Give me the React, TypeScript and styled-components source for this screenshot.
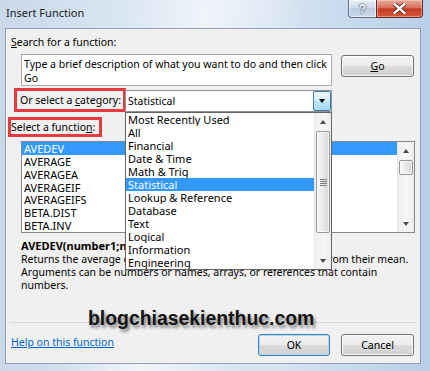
import React from 'react'
import styled, { createGlobalStyle } from 'styled-components'

const GlobalStyle = createGlobalStyle`
  html, body {
    margin: 0;
    padding: 0;
    background: #ffffff;
  }
  body {
    font-family: 'Noto Sans', 'Liberation Sans', sans-serif;
    font-size: 10.5px;
    color: #000;
  }
`

const Window = styled.div`
  position: relative;
  width: 430px;
  height: 371px;
  box-sizing: border-box;
  padding: 0 9px 7px 5px;
  display: flex;
  flex-direction: column;
  overflow: hidden;
  background:
    linear-gradient(100deg, rgba(255, 255, 255, 0) 25%, rgba(255, 255, 255, 0.6) 42%, rgba(255, 255, 255, 0) 62%),
    linear-gradient(90deg, #c9d9ea 0%, #dae6f3 30%, #d6e4f2 65%, #b7cfe9 100%);
`

const TitleBar = styled.div`
  height: 28px;
  flex: none;
  display: flex;
  justify-content: space-between;
  align-items: flex-start;
`

const Title = styled.div`
  margin: 5px 0 0 1px;
  font-size: 11px;
  line-height: 16px;
  color: #1b1b1b;
`

const CaptionButtons = styled.div`
  display: flex;
  margin-right: -2px;
`

const HelpCaption = styled.div`
  width: 28px;
  height: 18px;
  box-sizing: border-box;
  border: 1px solid #5e6f86;
  border-top: none;
  border-right: none;
  border-radius: 0 0 0 4px;
  background: linear-gradient(#e6eef7, #cfdcec 45%, #bccde2 50%, #c9d8ea);
  box-shadow: inset 0 0 0 1px rgba(255, 255, 255, 0.55);
  display: flex;
  align-items: center;
  justify-content: center;
  font-family: 'Liberation Sans', sans-serif;
  font-weight: 700;
  font-size: 12px;
  color: #ffffff;
  text-shadow: 0 0 1px #2c3a4f, 0 0 2px #2c3a4f;
`

const CloseCaption = styled.div`
  width: 47px;
  height: 18px;
  box-sizing: border-box;
  border: 1px solid #6a2b22;
  border-top: none;
  border-radius: 0 0 4px 0;
  background: linear-gradient(#e9ab9c, #d7705c 45%, #c43b24 52%, #d3583d);
  box-shadow: inset 0 0 0 1px rgba(255, 220, 210, 0.45);
  display: flex;
  align-items: center;
  justify-content: center;
`

const Client = styled.div`
  flex: 1;
  position: relative;
  display: flex;
  flex-direction: column;
  background: #f0f0f0;
  border: 1px solid #8e9fb3;
`

const Label = styled.div`
  margin: 6px 0 0 5px;
  line-height: 15px;
  white-space: nowrap;
`

const SearchRow = styled.div`
  display: flex;
  gap: 9px;
  margin: 4px 0 0 15px;
`

const SearchBox = styled.div`
  box-sizing: border-box;
  width: 311px;
  height: 32px;
  padding: 2px 2px;
  background: #ffffff;
  border: 1px solid #abadb3;
  border-top-color: #9fa2a8;
  line-height: 14px;
  white-space: nowrap;
`

const Button = styled.div<{ $w: number; $default?: boolean }>`
  box-sizing: border-box;
  width: ${p => p.$w}px;
  height: 22px;
  flex: none;
  border: 1px solid ${p => (p.$default ? '#3c7fb1' : '#707070')};
  border-radius: 3px;
  background: linear-gradient(#f3f3f3, #ebebeb 50%, #dddddd 50%, #cfcfcf);
  box-shadow: inset 0 0 0 1px ${p => (p.$default ? '#a8dcf7' : '#fbfbfb')};
  display: flex;
  align-items: center;
  justify-content: center;
  line-height: 15px;
`

const GoButton = styled(Button)`
  margin-top: 1px;
`

const CategoryRow = styled.div`
  display: flex;
  align-items: flex-start;
  margin: 2px 0 0 8px;
`

const Marked = styled.div<{ $w: number; $h: number; $pad: number }>`
  box-sizing: border-box;
  width: ${p => p.$w}px;
  height: ${p => p.$h}px;
  padding-left: ${p => p.$pad}px;
  border: 3px solid #e53a40;
  display: flex;
  align-items: center;
  white-space: nowrap;
`

const FunctionMarked = styled(Marked)`
  margin: 5px 0 0 2px;
`

const Combo = styled.div`
  position: relative;
  box-sizing: border-box;
  width: 207px;
  height: 22px;
  margin: 2px 0 0 -1px;
  display: flex;
  background: #ffffff;
  border: 1px solid #8f9092;
`

const ComboValue = styled.div`
  flex: 1;
  padding-left: 2px;
  line-height: 20px;
`

const DropButton = styled.div`
  width: 18px;
  box-sizing: border-box;
  border: 1px solid #3c7fb1;
  border-radius: 2px;
  background: linear-gradient(#eaf6fd, #d9f0fc 45%, #bee6fd 50%, #a7d9f5);
  display: flex;
  align-items: center;
  justify-content: center;
`

const Arrow = styled.span<{ $up?: boolean; $color?: string }>`
  width: 0;
  height: 0;
  border-left: 3.5px solid transparent;
  border-right: 3.5px solid transparent;
  ${p =>
    p.$up
      ? `border-bottom: 4px solid ${p.$color || '#000'};`
      : `border-top: 4px solid ${p.$color || '#000'};`}
`

const DropList = styled.div`
  position: absolute;
  top: calc(100% + 1px);
  left: -1px;
  z-index: 2;
  box-sizing: border-box;
  width: 207px;
  height: 158px;
  display: flex;
  background: #ffffff;
  border: 1px solid #646464;
`

const Options = styled.div`
  flex: 1;
  min-width: 0;
  display: flex;
  flex-direction: column;
`

const Option = styled.div<{ $selected?: boolean }>`
  height: 13px;
  line-height: 13px;
  padding-left: 2px;
  white-space: nowrap;
  overflow: hidden;
  font-size: 11px;
  background: ${p => (p.$selected ? '#3399ff' : 'transparent')};
  color: ${p => (p.$selected ? '#ffffff' : '#000000')};
`

const FunctionList = styled.div`
  box-sizing: border-box;
  width: 394px;
  height: 92px;
  margin: 4px 0 0 15px;
  display: flex;
  background: #ffffff;
  border: 1px solid #828790;
`

const ScrollTrack = styled.div`
  width: 17px;
  flex: none;
  display: flex;
  flex-direction: column;
  background: linear-gradient(90deg, #dcdcdc 0, #efefef 1px, #f6f6f6 60%, #ececec);
`

const ScrollArrow = styled.div`
  height: 17px;
  flex: none;
  display: flex;
  align-items: center;
  justify-content: center;
`

const ScrollSpace = styled.div`
  flex: 1;
  padding: 0 1px 0 2px;
`

const Thumb = styled.div<{ $top: number; $height: number }>`
  box-sizing: border-box;
  margin-top: ${p => p.$top}px;
  height: ${p => p.$height}px;
  border: 1px solid #979797;
  border-radius: 2px;
  background: linear-gradient(90deg, #f6f6f6, #e9e9e9 50%, #d7d7d7);
  box-shadow: inset 0 0 0 1px rgba(255, 255, 255, 0.7);
  display: flex;
  align-items: center;
  justify-content: center;
`

const Grip = styled.span`
  width: 7px;
  height: 7px;
  background: repeating-linear-gradient(#5a5a5a 0 1px, transparent 1px 2px);
  opacity: 0.75;
`

const Signature = styled.div`
  margin: 6px 0 0 15px;
  line-height: 13px;
  font-size: 11px;
  font-weight: 700;
  white-space: nowrap;
`

const Description = styled.div`
  margin: 1px 0 0 15px;
  line-height: 13px;
  white-space: nowrap;
`

const Spacer = styled.div`
  flex: 1;
`

const Separator = styled.div`
  height: 1px;
  margin: 0 4px;
  background: #d9d9d9;
`

const BottomRow = styled.div`
  display: flex;
  align-items: flex-start;
  gap: 11px;
  padding: 11px 6px 7px 5px;
`

const HelpLink = styled.a`
  margin: 1px auto 0 0;
  line-height: 15px;
  color: #0066cc;
  text-decoration: underline;
`

const Watermark = styled.div`
  position: absolute;
  left: 88px;
  top: 306px;
  z-index: 3;
  font-family: 'Liberation Sans', Arial, sans-serif;
  font-weight: 700;
  font-size: 19.4px;
  line-height: 24px;
  color: #141414;
  white-space: nowrap;
  text-shadow: 2px 3px 3px rgba(0, 0, 0, 0.45);
`

const Scrollbar: React.FC<{ thumbTop: number; thumbHeight: number; grip?: boolean }> = ({
  thumbTop,
  thumbHeight,
  grip,
}) => (
  <ScrollTrack>
    <ScrollArrow>
      <Arrow $up $color="#4a4a4a" />
    </ScrollArrow>
    <ScrollSpace>
      <Thumb $top={thumbTop} $height={thumbHeight}>
        {grip ? <Grip /> : null}
      </Thumb>
    </ScrollSpace>
    <ScrollArrow>
      <Arrow $color="#4a4a4a" />
    </ScrollArrow>
  </ScrollTrack>
)

const categories = [
  'Most Recently Used',
  'All',
  'Financial',
  'Date & Time',
  'Math & Trig',
  'Statistical',
  'Lookup & Reference',
  'Database',
  'Text',
  'Logical',
  'Information',
  'Engineering',
]

const functions = ['AVEDEV', 'AVERAGE', 'AVERAGEA', 'AVERAGEIF', 'AVERAGEIFS', 'BETA.DIST', 'BETA.INV']

const App: React.FC = () => {
  return (
    <>
      <GlobalStyle />
      <Window>
        <TitleBar>
          <Title>Insert Function</Title>
          <CaptionButtons>
            <HelpCaption>?</HelpCaption>
            <CloseCaption>
              <svg width="13" height="11" viewBox="0 0 13 11">
                <path
                  d="M1.5 1 L11.5 10 M11.5 1 L1.5 10"
                  stroke="#4a1a12"
                  strokeWidth="4.2"
                  strokeLinecap="round"
                />
                <path
                  d="M1.5 1 L11.5 10 M11.5 1 L1.5 10"
                  stroke="#ffffff"
                  strokeWidth="2.4"
                  strokeLinecap="round"
                />
              </svg>
            </CloseCaption>
          </CaptionButtons>
        </TitleBar>

        <Client>
          <Label>
            <u>S</u>earch for a function:
          </Label>
          <SearchRow>
            <SearchBox>
              Type a brief description of what you want to do and then click
              <br />
              Go
            </SearchBox>
            <GoButton $w={73}>
              <u>G</u>o
            </GoButton>
          </SearchRow>

          <CategoryRow>
            <Marked $w={112} $h={24} $pad={3}>
              Or select a&nbsp;<u>c</u>ategory:
            </Marked>
            <Combo>
              <ComboValue>Statistical</ComboValue>
              <DropButton>
                <Arrow />
              </DropButton>
              <DropList>
                <Options>
                  {categories.map(c => (
                    <Option key={c} $selected={c === 'Statistical'}>
                      {c}
                    </Option>
                  ))}
                </Options>
                <Scrollbar thumbTop={1} thumbHeight={102} grip />
              </DropList>
            </Combo>
          </CategoryRow>

          <FunctionMarked $w={94} $h={20} $pad={0}>
            Select a functio<u>n</u>:
          </FunctionMarked>
          <FunctionList>
            <Options>
              {functions.map(f => (
                <Option key={f} $selected={f === 'AVEDEV'}>
                  {f}
                </Option>
              ))}
            </Options>
            <Scrollbar thumbTop={1} thumbHeight={15} />
          </FunctionList>

          <Signature>AVEDEV(number1;number2;...)</Signature>
          <Description>
            Returns the average of the absolute deviations of data points from their mean.
            <br />
            Arguments can be numbers or names, arrays, or references that contain
            <br />
            numbers.
          </Description>

          <Spacer />
          <Separator />
          <BottomRow>
            <HelpLink>Help on this function</HelpLink>
            <Button $w={72} $default>
              OK
            </Button>
            <Button $w={73}>Cancel</Button>
          </BottomRow>
        </Client>

        <Watermark>blogchiasekienthuc.com</Watermark>
      </Window>
    </>
  )
}

export default App
